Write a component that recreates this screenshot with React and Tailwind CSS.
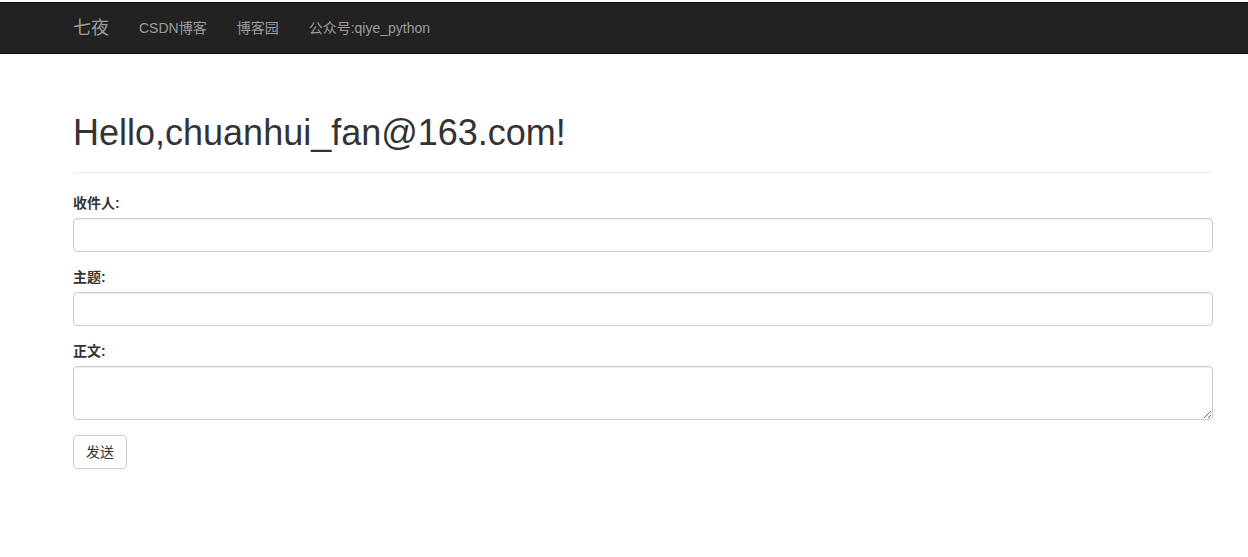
import React from 'react'

const font = { fontFamily: '"Liberation Sans", "Noto Sans CJK SC", sans-serif' }

const Field = ({ label, children }) => (
  <div className="mb-[15px]">
    <label className="block h-5 mb-[5px] text-[14px] leading-5 font-bold text-[#333]">{label}</label>
    {children}
  </div>
)

const inputCls =
  'block w-full rounded-[4px] border border-[#ccc] bg-white px-3 text-[14px] text-[#555] shadow-[inset_0_1px_1px_rgba(0,0,0,0.075)] outline-none'

export default function App() {
  return (
    <div className="min-h-[557px] bg-white pt-[2px]" style={font}>
      {/* Navbar */}
      <nav className="h-[52px] border-y border-[#080808] bg-[#222]">
        <div className="flex h-[50px] items-center pl-[73px] text-[#9d9d9d]">
          <a className="pr-[15px] text-[18px] leading-5">七夜</a>
          <a className="px-[15px] text-[14px] leading-5">CSDN博客</a>
          <a className="px-[15px] text-[14px] leading-5">博客园</a>
          <a className="px-[15px] text-[14px] leading-5">公众号:qiye_python</a>
        </div>
      </nav>

      {/* Content */}
      <div className="ml-[73px] w-[1140px]">
        <div className="mt-[59px] mb-5 border-b border-[#eee] pb-[9px]">
          <h1 className="mb-[10px] text-[36px] leading-[40px] font-normal text-[#333]">
            Hello,chuanhui_fan@163.com!
          </h1>
        </div>

        <form>
          <Field label="收件人:">
            <input type="text" className={`${inputCls} h-[34px]`} />
          </Field>
          <Field label="主题:">
            <input type="text" className={`${inputCls} h-[34px]`} />
          </Field>
          <Field label="正文:">
            <textarea rows={2} className={`${inputCls} h-[54px] py-[6px]`} />
          </Field>
          <button
            type="button"
            className="h-[34px] rounded-[4px] border border-[#ccc] bg-white px-3 text-[14px] text-[#333]"
          >
            发送
          </button>
        </form>
      </div>
    </div>
  )
}
